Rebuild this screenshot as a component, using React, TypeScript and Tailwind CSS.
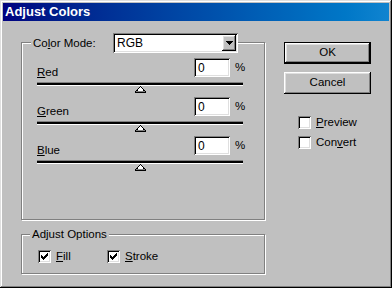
const sunken =
  'bg-white shadow-[inset_1px_1px_0_#808080,inset_-1px_-1px_0_#ffffff,inset_2px_2px_0_#000000,inset_-2px_-2px_0_#dfdfdf]';
const raised =
  'bg-[#c0c0c0] shadow-[inset_-1px_-1px_0_#000000,inset_1px_1px_0_#ffffff,inset_-2px_-2px_0_#808080,inset_2px_2px_0_#dfdfdf]';
const etched = 'border border-[#808080] shadow-[inset_1px_1px_0_#ffffff,1px_1px_0_#ffffff]';

function Check() {
  return (
    <svg width="7" height="7" viewBox="0 0 7 7" shapeRendering="crispEdges">
      <rect x="6" y="0" width="1" height="3" fill="#000" />
      <rect x="5" y="1" width="1" height="3" fill="#000" />
      <rect x="4" y="2" width="1" height="3" fill="#000" />
      <rect x="3" y="3" width="1" height="3" fill="#000" />
      <rect x="2" y="4" width="1" height="3" fill="#000" />
      <rect x="1" y="3" width="1" height="3" fill="#000" />
      <rect x="0" y="2" width="1" height="3" fill="#000" />
    </svg>
  );
}

function Checkbox({ checked, children }: { checked?: boolean; children: React.ReactNode }) {
  return (
    <div className="flex h-[13px] items-center gap-[5px]">
      <div className={`flex h-[13px] w-[13px] items-center justify-center ${sunken}`}>
        {checked && <Check />}
      </div>
      <span className="leading-[13px]">{children}</span>
    </div>
  );
}

function Thumb() {
  return (
    <svg width="11" height="7" viewBox="0 0 11 7" shapeRendering="crispEdges">
      <polygon points="5.5,0.5 10.5,6 0.5,6" fill="#fff" stroke="#000" strokeWidth="1" />
      <rect x="1" y="5" width="9" height="1" fill="#808080" />
    </svg>
  );
}

function SliderRow({ hot, rest, first }: { hot: string; rest: string; first?: boolean }) {
  return (
    <div className={first ? 'mt-[5px]' : 'mt-[4px]'}>
      <div className="flex w-[206px] items-end justify-between">
        <span className="-mb-[2px] leading-[13px]">
          <u className="underline-offset-[1px]">{hot}</u>
          {rest}
        </span>
        <div className="flex items-center gap-[5px]">
          <div className={`flex h-[19px] w-[36px] items-center pl-[4px] text-[12px] ${sunken}`}>0</div>
          <span className="w-[8px]">%</span>
        </div>
      </div>
      <div className="mt-[5px] h-[4px] w-[206px] border-y border-t-[#808080] border-b-white bg-black" />
      <div className="flex w-[206px] justify-center">
        <Thumb />
      </div>
    </div>
  );
}

export default function App() {
  return (
    <div className="h-[288px] w-[392px] bg-[#c0c0c0] p-[3px] font-['Liberation_Sans',Arial,sans-serif] text-[11.5px] text-black shadow-[inset_-1px_-1px_0_#000000,inset_1px_1px_0_#dfdfdf,inset_-2px_-2px_0_#808080,inset_2px_2px_0_#ffffff]">
      <div className="flex h-[18px] items-center bg-gradient-to-r from-[#000080] to-[#1084d0] pl-[2px] text-[13px] font-bold text-white">
        Adjust Colors
      </div>

      <div className="flex gap-[19px] pl-[18px] pt-[21px]">
        <div className="w-[244px]">
          <div className={`h-[178px] ${etched}`}>
            <div className="-mt-[10px] ml-[9px] flex items-center">
              <span className="w-[82px] bg-[#c0c0c0] px-[2px] leading-[13px]">
                Co<u className="underline-offset-[1px]">l</u>or Mode:
              </span>
              <div className={`flex h-[20px] w-[125px] items-center justify-between pl-[4px] pr-[2px] text-[12px] ${sunken}`}>
                <span>RGB</span>
                <div className={`flex h-[16px] w-[14px] items-center justify-center ${raised}`}>
                  <svg width="7" height="4" viewBox="0 0 7 4" shapeRendering="crispEdges">
                    <polygon points="0,0 7,0 3.5,4" fill="#000" />
                  </svg>
                </div>
              </div>
            </div>
            <div className="pl-[15px]">
              <SliderRow hot="R" rest="ed" first />
              <SliderRow hot="G" rest="reen" />
              <SliderRow hot="B" rest="lue" />
            </div>
          </div>

          <div className={`mt-[14px] h-[40px] ${etched}`}>
            <div className="-mt-[7px] ml-[8px] flex">
              <span className="bg-[#c0c0c0] px-[2px] leading-[13px]">Adjust Options</span>
            </div>
            <div className="mt-[9px] flex pl-[16px]">
              <div className="w-[69px]">
                <Checkbox checked>
                  <u className="underline-offset-[1px]">F</u>ill
                </Checkbox>
              </div>
              <Checkbox checked>
                <u className="underline-offset-[1px]">S</u>troke
              </Checkbox>
            </div>
          </div>
        </div>

        <div className="w-[87px]">
          <button className="flex h-[22px] w-[87px] items-center justify-center border border-black">
            <span className={`flex h-full w-full items-center justify-center ${raised}`}>OK</span>
          </button>
          <button className={`mt-[8px] flex h-[22px] w-[87px] items-center justify-center ${raised}`}>
            Cancel
          </button>
          <div className="mt-[22px] flex flex-col gap-[7px] pl-[14px]">
            <Checkbox>
              <u className="underline-offset-[1px]">P</u>review
            </Checkbox>
            <Checkbox>
              Con<u className="underline-offset-[1px]">v</u>ert
            </Checkbox>
          </div>
        </div>
      </div>
    </div>
  );
}
